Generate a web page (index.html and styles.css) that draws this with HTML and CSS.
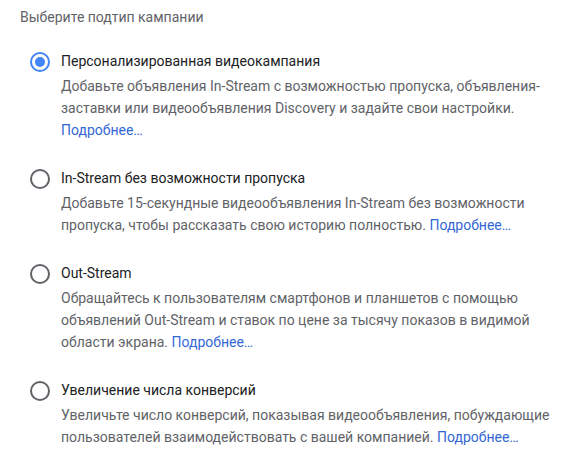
FILE: index.html
```html
<!DOCTYPE html>
<html lang="ru">
<head>
<meta charset="utf-8">
<title>Подтип кампании</title>
<link rel="stylesheet" href="styles.css">
</head>
<body>
<div class="panel">
  <div class="heading">Выберите подтип кампании</div>
  <div class="options">
    <label class="option">
      <span class="radio checked"><span class="dot"></span></span>
      <span class="body">
        <span class="title">Персонализированная видеокампания</span>
        <span class="desc">Добавьте объявления In-Stream с возможностью пропуска, объявления-заставки или видеообъявления Discovery и задайте свои настройки. <a class="more" href="#">Подробнее…</a></span>
      </span>
    </label>
    <label class="option">
      <span class="radio"></span>
      <span class="body">
        <span class="title">In-Stream без возможности пропуска</span>
        <span class="desc">Добавьте 15-секундные видеообъявления In-Stream без возможности пропуска, чтобы рассказать свою историю полностью. <a class="more" href="#">Подробнее…</a></span>
      </span>
    </label>
    <label class="option">
      <span class="radio"></span>
      <span class="body">
        <span class="title">Out-Stream</span>
        <span class="desc">Обращайтесь к пользователям смартфонов и планшетов с помощью объявлений Out-Stream и ставок по цене за тысячу показов в видимой области экрана. <a class="more" href="#">Подробнее…</a></span>
      </span>
    </label>
    <label class="option">
      <span class="radio"></span>
      <span class="body">
        <span class="title">Увеличение числа конверсий</span>
        <span class="desc">Увеличьте число конверсий, показывая видеообъявления, побуждающие пользователей взаимодействовать с вашей компанией. <a class="more" href="#">Подробнее…</a></span>
      </span>
    </label>
  </div>
</div>
</body>
</html>
```
FILE: styles.css
```css
html, body {
  margin: 0;
  padding: 0;
  background: #ffffff;
}
body {
  font-family: Roboto, "Noto Sans", Arial, sans-serif;
  font-size: 14px;
  color: #202124;
}
.panel {
  padding: 7px 0 0 20px;
  width: 550px;
}
.heading {
  color: #5f6368;
  font-size: 14px;
  line-height: 20px;
}
.options {
  display: flex;
  flex-direction: column;
  gap: 27px;
  margin-top: 24px;
}
.option {
  display: flex;
  align-items: flex-start;
  gap: 11px;
  padding-left: 10px;
  cursor: pointer;
}
.radio {
  flex: none;
  width: 16px;
  height: 16px;
  border: 2px solid #5f6368;
  border-radius: 50%;
  display: flex;
  align-items: center;
  justify-content: center;
  margin-top: 1px;
}
.radio.checked {
  border-color: #4285f4;
}
.dot {
  width: 10px;
  height: 10px;
  border-radius: 50%;
  background: #4285f4;
}
.body {
  display: flex;
  flex-direction: column;
}
.title {
  font-size: 14px;
  line-height: 20px;
  color: #202124;
}
.desc {
  margin-top: 4px;
  font-size: 14px;
  line-height: 22px;
  color: #5f6368;
}
.more {
  color: #3367d6;
  text-decoration: none;
}
```
